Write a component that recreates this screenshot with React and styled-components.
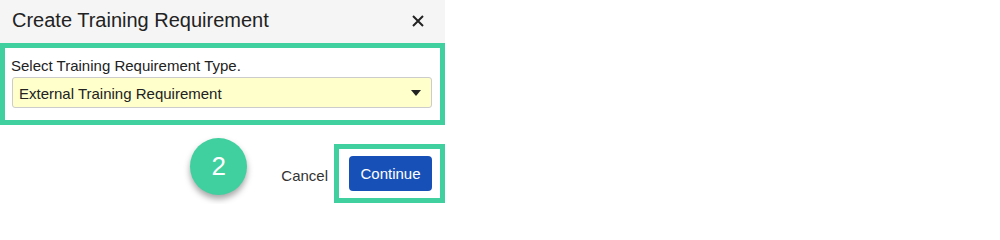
import styled, { createGlobalStyle } from 'styled-components'

const GlobalStyle = createGlobalStyle`
  html, body {
    margin: 0;
    padding: 0;
    background: #ffffff;
    font-family: "Liberation Sans", Arial, sans-serif;
    color: #333333;
  }
`

const Dialog = styled.div`
  width: 445px;
  background: #ffffff;
`

const Header = styled.div`
  height: 43px;
  background: #f5f5f5;
  display: flex;
  align-items: center;
  justify-content: space-between;
  padding: 0 20px 0 12px;
  box-sizing: border-box;
`

const Title = styled.h1`
  margin: 0;
  font-size: 20px;
  font-weight: 400;
  color: #222222;
  line-height: 24px;
  padding-bottom: 3px;
`

const CloseButton = styled.button`
  border: none;
  background: transparent;
  padding: 0;
  width: 14px;
  height: 14px;
  display: flex;
  align-items: center;
  justify-content: center;
  cursor: pointer;
  margin-bottom: 1px;
`

const Highlight = styled.div`
  border: 5px solid #40d09f;
  box-sizing: border-box;
`

const Body = styled(Highlight)`
  height: 82px;
  padding: 9px 8px 0 6px;
`

const Label = styled.label`
  display: block;
  font-size: 15px;
  line-height: 17px;
  color: #222222;
  margin-bottom: 3px;
`

const Select = styled.div`
  height: 31px;
  margin-left: 1px;
  background: #ffffcc;
  border: 1px solid #cccccc;
  border-radius: 3px;
  box-sizing: border-box;
  display: flex;
  align-items: center;
  justify-content: space-between;
  padding: 1px 10px 0 6px;
  font-size: 15px;
  color: #222222;
`

const Caret = styled.span`
  width: 0;
  height: 0;
  border-left: 5px solid transparent;
  border-right: 5px solid transparent;
  border-top: 6px solid #222222;
`

const Footer = styled.div`
  height: 79px;
  display: flex;
  align-items: center;
  justify-content: flex-end;
  padding: 19px 0 1px;
  box-sizing: border-box;
`

const StepBadge = styled.div`
  width: 57px;
  height: 57px;
  border-radius: 50%;
  background: #40d09f;
  color: #ffffff;
  font-size: 26px;
  display: flex;
  align-items: center;
  justify-content: center;
  box-shadow: 0 4px 6px rgba(0, 0, 0, 0.35);
  margin-bottom: 15px;
  margin-right: 34px;
`

const CancelLink = styled.button`
  border: none;
  background: transparent;
  padding: 0;
  font-family: inherit;
  font-size: 15px;
  color: #333333;
  margin-right: 6px;
  margin-top: 3px;
  cursor: pointer;
`

const ButtonBox = styled(Highlight)`
  width: 111px;
  height: 59px;
  display: flex;
  align-items: center;
  padding-left: 10px;
`

const PrimaryButton = styled.button`
  width: 83px;
  height: 35px;
  border: none;
  border-radius: 4px;
  background: #1751b8;
  color: #ffffff;
  font-family: inherit;
  font-size: 15px;
  cursor: pointer;
  padding: 0;
`

const App = () => {
  return (
    <>
      <GlobalStyle />
      <Dialog>
        <Header>
          <Title>Create Training Requirement</Title>
          <CloseButton aria-label="Close">
            <svg width="12" height="12" viewBox="0 0 12 12">
              <path d="M1 1 L11 11 M11 1 L1 11" stroke="#222" strokeWidth="2" />
            </svg>
          </CloseButton>
        </Header>
        <Body>
          <Label>Select Training Requirement Type.</Label>
          <Select>
            <span>External Training Requirement</span>
            <Caret />
          </Select>
        </Body>
        <Footer>
          <StepBadge>2</StepBadge>
          <CancelLink>Cancel</CancelLink>
          <ButtonBox>
            <PrimaryButton>Continue</PrimaryButton>
          </ButtonBox>
        </Footer>
      </Dialog>
    </>
  )
}

export default App
